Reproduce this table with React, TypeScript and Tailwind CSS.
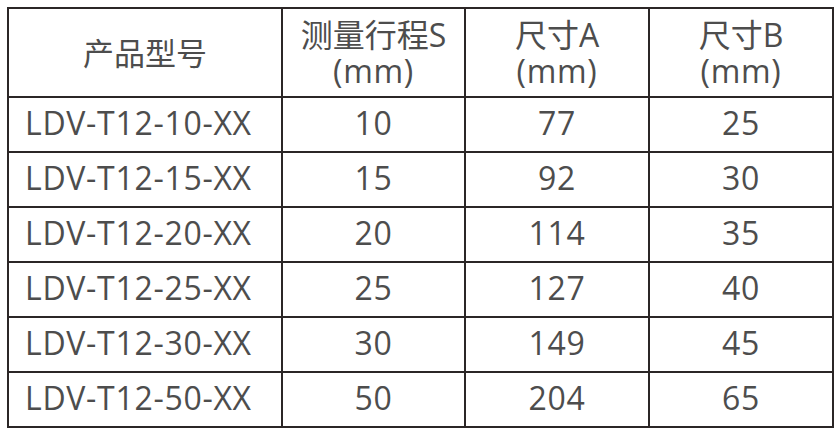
const rows = [
  ['LDV-T12-10-XX', '10', '77', '25'],
  ['LDV-T12-15-XX', '15', '92', '30'],
  ['LDV-T12-20-XX', '20', '114', '35'],
  ['LDV-T12-25-XX', '25', '127', '40'],
  ['LDV-T12-30-XX', '30', '149', '45'],
  ['LDV-T12-50-XX', '50', '204', '65'],
];

export default function App() {
  return (
    <div
      className="w-[840px] h-[435px] bg-white pt-[7px] pl-[7px] text-[#4d4d4d]"
      style={{ fontFamily: '"Open Sans", "Noto Sans CJK SC", sans-serif' }}
    >
      <div className="grid grid-cols-[272px_181px_182px_182px] grid-rows-[87px_repeat(6,53px)] gap-[2px] p-[2px] bg-[#2b2626] w-fit text-[32px] leading-[36px] tracking-[0.7px]">
        <div className="bg-white flex items-center justify-center tracking-normal text-[31px]">产品型号</div>
        <div className="bg-white flex flex-col items-center justify-center">
          <span className="tracking-normal">测量行程S</span>
          <span>(mm)</span>
        </div>
        <div className="bg-white flex flex-col items-center justify-center">
          <span className="tracking-normal">尺寸A</span>
          <span>(mm)</span>
        </div>
        <div className="bg-white flex flex-col items-center justify-center">
          <span className="tracking-normal">尺寸B</span>
          <span>(mm)</span>
        </div>
        {rows.map((r) => (
          <>
            <div key={r[0]} className="bg-white flex items-center pl-[16px] pb-[3px]">{r[0]}</div>
            <div className="bg-white flex items-center justify-center pb-[3px]">{r[1]}</div>
            <div className="bg-white flex items-center justify-center pb-[3px]">{r[2]}</div>
            <div className="bg-white flex items-center justify-center pb-[3px]">{r[3]}</div>
          </>
        ))}
      </div>
    </div>
  );
}
